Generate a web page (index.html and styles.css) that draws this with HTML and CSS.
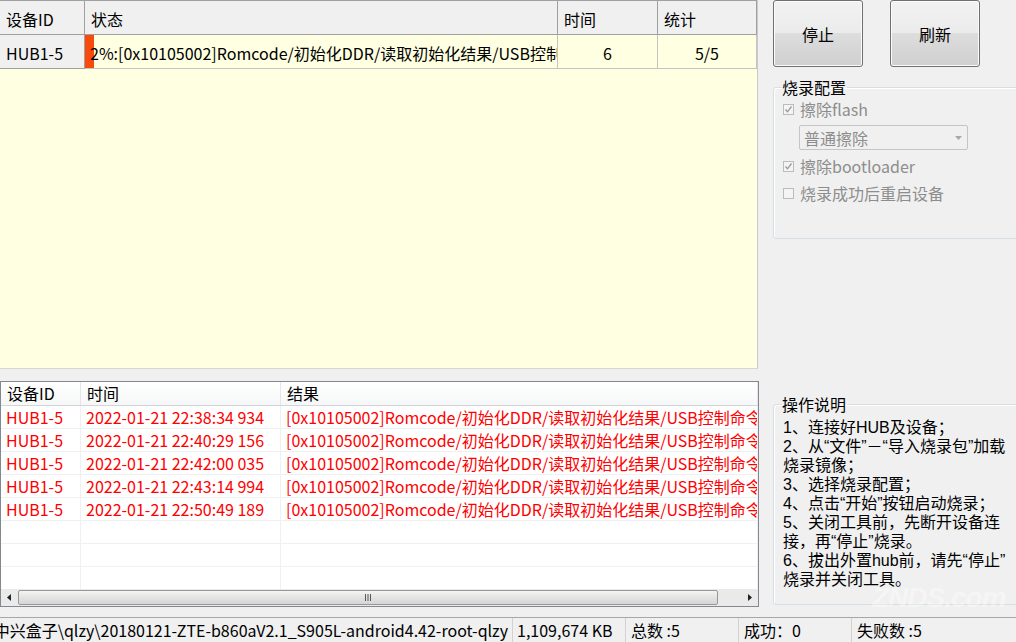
FILE: index.html
```html
<!DOCTYPE html>
<html lang="zh-CN">
<head>
    <meta charset="UTF-8">
    <title>USB烧录工具</title>
    <link rel="stylesheet" href="styles.css">
</head>
<body>
    <div class="window">
        <div class="workspace">
            <div class="left-pane">
                <!-- 设备列表 -->
                <div class="device-grid">
                    <div class="grid-head">
                        <div class="gh-cell">设备ID</div>
                        <div class="gh-cell">状态</div>
                        <div class="gh-cell">时间</div>
                        <div class="gh-cell">统计</div>
                    </div>
                    <div class="grid-row">
                        <div class="row-head">HUB1-5</div>
                        <div class="status-cell" style="--pct: 2%">2%:[0x10105002]Romcode/初始化DDR/读取初始化结果/USB控制命令</div>
                        <div class="num-cell">6</div>
                        <div class="num-cell">5/5</div>
                    </div>
                </div>

                <!-- 烧录日志 -->
                <div class="log-list">
                    <div class="log-head">
                        <div class="lh-cell">设备ID</div>
                        <div class="lh-cell">时间</div>
                        <div class="lh-cell">结果</div>
                    </div>
                    <div class="log-body">
                        <div class="log-row error">
                            <div class="log-cell">HUB1-5</div>
                            <div class="log-cell">2022-01-21 22:38:34 934</div>
                            <div class="log-cell">[0x10105002]Romcode/初始化DDR/读取初始化结果/USB控制命令</div>
                        </div>
                        <div class="log-row error">
                            <div class="log-cell">HUB1-5</div>
                            <div class="log-cell">2022-01-21 22:40:29 156</div>
                            <div class="log-cell">[0x10105002]Romcode/初始化DDR/读取初始化结果/USB控制命令</div>
                        </div>
                        <div class="log-row error">
                            <div class="log-cell">HUB1-5</div>
                            <div class="log-cell">2022-01-21 22:42:00 035</div>
                            <div class="log-cell">[0x10105002]Romcode/初始化DDR/读取初始化结果/USB控制命令</div>
                        </div>
                        <div class="log-row error">
                            <div class="log-cell">HUB1-5</div>
                            <div class="log-cell">2022-01-21 22:43:14 994</div>
                            <div class="log-cell">[0x10105002]Romcode/初始化DDR/读取初始化结果/USB控制命令</div>
                        </div>
                        <div class="log-row error">
                            <div class="log-cell">HUB1-5</div>
                            <div class="log-cell">2022-01-21 22:50:49 189</div>
                            <div class="log-cell">[0x10105002]Romcode/初始化DDR/读取初始化结果/USB控制命令</div>
                        </div>
                        <div class="log-row"><div class="log-cell"></div><div class="log-cell"></div><div class="log-cell"></div></div>
                        <div class="log-row"><div class="log-cell"></div><div class="log-cell"></div><div class="log-cell"></div></div>
                        <div class="log-row"><div class="log-cell"></div><div class="log-cell"></div><div class="log-cell"></div></div>
                    </div>
                    <div class="hscroll">
                        <div class="scroll-btn">
                            <svg width="5" height="7" viewBox="0 0 5 7"><path d="M4 0 L0 3.5 L4 7 Z" fill="#222"/></svg>
                        </div>
                        <div class="scroll-track">
                            <div class="scroll-thumb">
                                <svg width="8" height="7" viewBox="0 0 8 7"><path d="M1.5 0v7M4 0v7M6.5 0v7" stroke="#555" stroke-width="1"/></svg>
                            </div>
                        </div>
                        <div class="scroll-btn">
                            <svg width="5" height="7" viewBox="0 0 5 7"><path d="M1 0 L5 3.5 L1 7 Z" fill="#222"/></svg>
                        </div>
                    </div>
                </div>
            </div>

            <div class="side-pane">
                <div class="buttons">
                    <button class="btn">停止</button>
                    <button class="btn">刷新</button>
                </div>

                <fieldset class="group burn-config">
                    <legend>烧录配置</legend>
                    <div class="check-row first">
                        <span class="check-box checked"><svg width="9" height="9" viewBox="0 0 9 9"><path d="M1.5 4.5 L3.5 6.8 L7.5 1.5" fill="none" stroke="#9a9a9a" stroke-width="1.3"/></svg></span>
                        <span class="check-label">擦除flash</span>
                    </div>
                    <div class="combo">
                        <span>普通擦除</span>
                        <svg width="7" height="4" viewBox="0 0 7 4"><path d="M0 0 H7 L3.5 4 Z" fill="#a8a8a8"/></svg>
                    </div>
                    <div class="check-row">
                        <span class="check-box checked"><svg width="9" height="9" viewBox="0 0 9 9"><path d="M1.5 4.5 L3.5 6.8 L7.5 1.5" fill="none" stroke="#9a9a9a" stroke-width="1.3"/></svg></span>
                        <span class="check-label">擦除bootloader</span>
                    </div>
                    <div class="check-row last">
                        <span class="check-box"></span>
                        <span class="check-label">烧录成功后重启设备</span>
                    </div>
                </fieldset>

                <fieldset class="group help">
                    <legend>操作说明</legend>
                    <div class="help-text">
                        1、连接好HUB及设备；<br>
                        2、从“文件”－“导入烧录包”加载<br>
                        烧录镜像；<br>
                        3、选择烧录配置；<br>
                        4、点击“开始”按钮启动烧录；<br>
                        5、关闭工具前，先断开设备连<br>
                        接，再“停止”烧录。<br>
                        6、拔出外置hub前，请先“停止”<br>
                        烧录并关闭工具。
                    </div>
                    <div class="watermark">ZNDS.com</div>
                </fieldset>
            </div>
        </div>

        <div class="status-bar">
            <div class="status-item path"><span>E:\固件\中兴盒子\qlzy\20180121-ZTE-b860aV2.1_S905L-android4.42-root-qlzy</span></div>
            <div class="status-item size">1,109,674 KB</div>
            <div class="status-item count">总数 :5</div>
            <div class="status-item count">成功：0</div>
            <div class="status-item fail">失败数 :5</div>
        </div>
    </div>
</body>
</html>
```

FILE: styles.css
```css
* {
    box-sizing: border-box;
}

body {
    margin: 0;
    overflow: hidden;
    background-color: #f0f0f0;
    font-family: "Noto Sans CJK SC", sans-serif;
    font-size: 16px;
    color: #000;
}

.window {
    width: 1016px;
    height: 642px;
    display: flex;
    flex-direction: column;
}

.workspace {
    display: flex;
    height: 617px;
}

.left-pane {
    width: 759px;
    flex-shrink: 0;
    display: flex;
    flex-direction: column;
}

/* 设备列表 */
.device-grid {
    width: 758px;
    height: 369px;
    background-color: #ffffe1;
    border-right: 1px solid #c9c9c9;
    border-bottom: 1px solid #d6d6d6;
}

.grid-head,
.grid-row {
    display: grid;
    grid-template-columns: 85px 473px 100px 99px;
}

.grid-head {
    height: 35px;
}

.gh-cell {
    background-color: #f0f0f0;
    border-top: 1px solid #a0a0a0;
    border-bottom: 1px solid #a0a0a0;
    border-right: 1px solid #a0a0a0;
    padding: 3px 0 0 6px;
    display: flex;
    align-items: center;
    line-height: 20px;
}

.grid-row {
    height: 34px;
}

.grid-row > div {
    display: flex;
    align-items: center;
    padding-top: 2px;
    line-height: 20px;
    white-space: nowrap;
    overflow: hidden;
}

.row-head {
    background-color: #f0f0f0;
    border-right: 1px solid #a0a0a0;
    border-bottom: 1px solid #a0a0a0;
    padding-left: 6px;
}

.status-cell {
    padding-left: 5px;
    border-right: 1px solid #c4c4c4;
    border-bottom: 1px solid #c4c4c4;
    background: linear-gradient(90deg, #f84a0c 0, #f84a0c var(--pct), #ffffe1 var(--pct));
}

.num-cell {
    justify-content: center;
    border-right: 1px solid #c4c4c4;
    border-bottom: 1px solid #c4c4c4;
}

/* 烧录日志 */
.log-list {
    margin-top: 12px;
    height: 226px;
    background-color: #fff;
    border: 1px solid #828790;
    display: flex;
    flex-direction: column;
}

.log-head,
.log-row {
    display: grid;
    grid-template-columns: 80px 200px 1fr;
}

.log-head {
    height: 24px;
    border-bottom: 1px solid #d5d5d5;
    background: linear-gradient(#ffffff, #f6f7f8);
}

.lh-cell {
    border-right: 1px solid #e5e5e5;
    padding-left: 6px;
    line-height: 22px;
}

.log-body {
    flex: 1;
    overflow: hidden;
}

.log-row {
    height: 23px;
    border-bottom: 1px solid #f0f0f0;
}

.log-row.error {
    color: #ff0000;
}

.log-cell {
    border-right: 1px solid #f0f0f0;
    padding-left: 5px;
    line-height: 22px;
    white-space: nowrap;
    overflow: hidden;
}

.hscroll {
    height: 17px;
    display: flex;
    align-items: center;
    background-color: #eaeaea;
}

.scroll-btn {
    width: 17px;
    height: 17px;
    display: flex;
    align-items: center;
    justify-content: center;
}

.scroll-track {
    flex: 1;
    height: 17px;
    padding: 1px 23px 1px 0;
}

.scroll-thumb {
    height: 15px;
    border: 1px solid #979797;
    border-radius: 2px;
    background: linear-gradient(#f4f4f4, #e3e3e3 50%, #d6d6d6);
    display: flex;
    align-items: center;
    justify-content: center;
}

/* 右侧面板 */
.side-pane {
    flex: 1;
    min-width: 0;
    padding-left: 14px;
    display: flex;
    flex-direction: column;
}

.buttons {
    display: flex;
    gap: 27px;
}

.btn {
    width: 90px;
    height: 67px;
    border: 1px solid #707070;
    border-radius: 3px;
    background: linear-gradient(#f2f2f2 0%, #ebebeb 50%, #dddddd 50%, #cfcfcf 100%);
    box-shadow: inset 0 0 0 1px #fbfbfb;
    font-family: inherit;
    font-size: 16px;
    color: #000;
    padding: 0;
}

.group {
    margin: 0;
    width: 262px;
    padding: 0 7px;
    border: 1px solid #d5dfe5;
    border-radius: 3px;
    box-shadow: inset 1px 1px 0 #fff;
}

.group legend {
    padding: 0 1px;
    line-height: 16px;
    font-size: 16px;
}

.burn-config {
    margin-top: 12px;
    height: 160px;
}

.check-row {
    height: 20px;
    margin-top: 6px;
    display: flex;
    align-items: center;
    color: #8d8d8d;
    line-height: 20px;
}

.check-row.first {
    margin-top: 4px;
}

.check-row.last {
    margin-top: 7px;
}

.check-box {
    width: 11px;
    height: 11px;
    margin: 0 6px 0 2px;
    border: 1px solid #bcbcbc;
    background-color: #f4f4f4;
    display: flex;
    align-items: center;
    justify-content: center;
}

.combo {
    margin: 6px 0 0 18px;
    width: 169px;
    height: 25px;
    border: 1px solid #c5c5c5;
    border-radius: 2px;
    background-color: #f0f0f0;
    color: #8d8d8d;
    display: flex;
    align-items: center;
    justify-content: space-between;
    padding: 0 5px 0 4px;
}

.help {
    margin-top: 157px;
    height: 209px;
    position: relative;
}

.help-text {
    margin-top: 6px;
    padding-left: 2px;
    font-family: "Liberation Sans", "Noto Sans CJK SC", sans-serif;
    line-height: 19px;
    white-space: nowrap;
}

.watermark {
    position: absolute;
    left: 98px;
    top: 170px;
    font-family: "Liberation Sans", sans-serif;
    font-size: 28px;
    font-weight: bold;
    font-style: italic;
    color: rgba(255, 255, 255, 0.4);
    letter-spacing: -1px;
}

/* 状态栏 */
.status-bar {
    height: 25px;
    border-top: 1px solid #a7a7a7;
    display: flex;
}

.status-item {
    display: flex;
    align-items: center;
    padding-left: 5px;
    white-space: nowrap;
    overflow: hidden;
    border-right: 1px solid #d2d2d2;
    line-height: 20px;
}

.status-item.path {
    width: 513px;
    justify-content: flex-end;
    padding: 0 4px 0 0;
}

.status-item.size {
    width: 113px;
    padding-left: 4px;
}

.status-item.count {
    width: 113px;
}

.status-item.fail {
    flex: 1;
    border-right: none;
}
```
